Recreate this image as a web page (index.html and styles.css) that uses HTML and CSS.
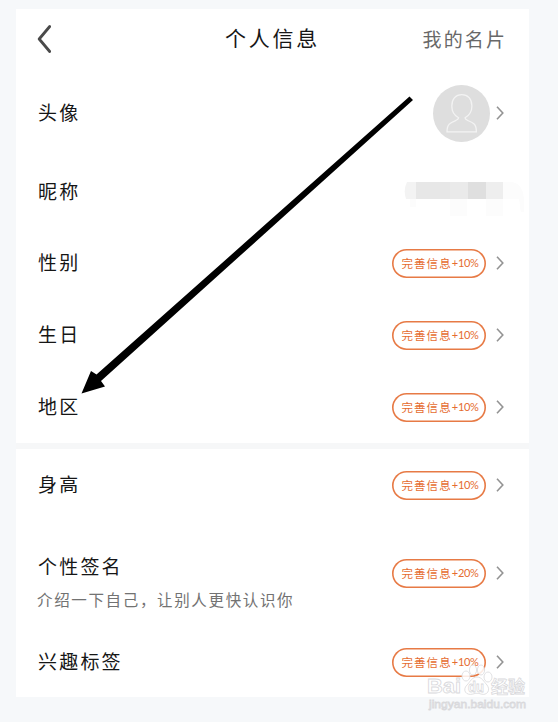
FILE: index.html
```html
<!DOCTYPE html>
<html lang="zh-CN">
<head>
<meta charset="utf-8">
<title>个人信息</title>
<link rel="stylesheet" href="styles.css">
</head>
<body>
<svg class="defs" width="0" height="0"><symbol id="chev" viewBox="0 0 8 14"><path d="M1 .8 6.8 7 1 13.2" fill="none" stroke="#939393" stroke-width="1.6"/></symbol></svg>
<main class="page">
  <header class="header">
    <svg class="back" viewBox="0 0 14 28"><path d="M12.7 1.5 2.2 14 12.7 26.5" fill="none" stroke="#4a4a4a" stroke-width="2.8" stroke-linecap="round" stroke-linejoin="round"/></svg>
    <h1 class="title">个人信息</h1>
    <a class="card-link">我的名片</a>
  </header>
  <section class="group">
    <div class="row row-avatar"><span class="label">头像</span>
      <svg class="avatar" viewBox="0 0 57 57"><circle cx="28.5" cy="28.5" r="28.5" fill="#dedede"/><path d="M25.6 32.8C21.2 30.4 18.8 25.7 18.8 21 18.8 14 22.8 9.6 28.8 9.6S38.9 14 38.9 21C38.9 25.7 36.4 30.4 32 32.8Q32 34.3 34.8 35.5C40.2 37.7 43.4 39 43.4 46.8H14C14 39 17.4 37.7 22.8 35.5Q25.6 34.3 25.6 32.8Z" fill="none" stroke="#f3f3f3" stroke-width="1.3"/></svg>
      <svg class="chev"><use href="#chev"/></svg></div>
    <div class="row row-name"><span class="label">昵称</span>
      <svg class="mosaic" viewBox="0 0 120 36"><path d="M99 0h7q13 0 14 18v12q-4 2-4-7l-1-6H99Z" fill="#fcfcfc"/><path d="M46 17h17v17H46zM82 17h17v17H82zM6 17h6v8H6z" fill="#fcfcfc"/><path d="M3 0h9v17H2Q-1 8 3 0Z" fill="#f3f3f3"/><path d="M12 0h34v17H12z" fill="#e7e7e7"/><path d="M46 0h18v17H46z" fill="#eaeaea"/><path d="M64 0h18v17H64z" fill="#dfdfdf"/><path d="M82 0h17v17H82z" fill="#eee"/></svg></div>
    <div class="row"><span class="label">性别</span><span class="badge">完善信息<b>+10%</b></span><svg class="chev"><use href="#chev"/></svg></div>
    <div class="row"><span class="label">生日</span><span class="badge">完善信息<b>+10%</b></span><svg class="chev"><use href="#chev"/></svg></div>
    <div class="row"><span class="label">地区</span><span class="badge">完善信息<b>+10%</b></span><svg class="chev"><use href="#chev"/></svg></div>
  </section>
  <section class="group">
    <div class="row"><span class="label">身高</span><span class="badge">完善信息<b>+10%</b></span><svg class="chev"><use href="#chev"/></svg></div>
    <div class="row row-sign"><div class="label">个性签名<p class="hint">介绍一下自己，让别人更快认识你</p></div><span class="badge">完善信息<b>+20%</b></span><svg class="chev"><use href="#chev"/></svg></div>
    <div class="row row-tags"><span class="label">兴趣标签</span><span class="badge">完善信息<b>+10%</b></span><svg class="chev"><use href="#chev"/></svg></div>
  </section>
</main>
<svg class="arrow" viewBox="0 0 558 722"><path d="M409.5 96.5 413 100 101 381 105 386.5 81.5 393.5 91 371 96.5 374.5Z" fill="#000"/></svg>
<svg class="watermark" viewBox="0 0 104 50">
  <g fill="#fff" fill-opacity=".85" stroke="#d9d9dc" stroke-width=".8">
    <ellipse cx="41" cy="14" rx="4" ry="5"/><ellipse cx="48" cy="8" rx="3.6" ry="5"/><ellipse cx="56" cy="8" rx="3.6" ry="5"/><ellipse cx="63" cy="15" rx="4" ry="5"/>
    <path d="M52 15c5 0 7 5 10 8 4 5 0 11-6 9-3-1-5-1-8 0-7 2-11-4-6-9 3-3 5-8 10-8Z"/>
    <text class="wm-bai" x="2" y="31" textLength="34" lengthAdjust="spacingAndGlyphs">Bai</text>
    <text class="wm-du" x="43" y="30" textLength="16" lengthAdjust="spacingAndGlyphs">du</text>
    <text class="wm-cn" x="66" y="30.5" textLength="34" lengthAdjust="spacingAndGlyphs">经验</text>
    <text class="wm-url" x="4" y="46" textLength="97" lengthAdjust="spacingAndGlyphs">jingyan.baidu.com</text>
  </g>
</svg>
</body>
</html>
```
FILE: styles.css
```css
* { box-sizing: border-box; }
body {
  position: relative;
  height: 722px;
  margin: 0;
  padding: 9px 29px 0 16px;
  overflow: hidden;
  background: #f6f8fa;
  color: #161616;
  font-family: "Noto Sans CJK SC", sans-serif;
}
.defs { position: absolute; }
.page {
  display: grid;
  gap: 0;
  background: #fff;
}
.header {
  display: grid;
  grid-template-columns: 1fr auto 1fr;
  align-items: center;
  height: 60px;
  padding: 0 22px 0 21px;
}
.back { width: 14px; height: 28px; }
.title {
  margin: 0;
  padding: 0 0 4px 1px;
  font-size: 21px;
  font-weight: 400;
  letter-spacing: 2.7px;
  line-height: 30px;
}
.card-link {
  justify-self: end;
  color: #686868;
  font-size: 19px;
  letter-spacing: 2.1px;
  line-height: 28px;
}
.group + .group { border-top: 6px solid #f6f7f8; }
.row {
  display: flex;
  align-items: center;
  height: 72px;
  padding: 0 25px 0 22px;
}
.label {
  flex: 1;
  padding-bottom: 2px;
  font-size: 19px;
  letter-spacing: 2.2px;
  line-height: 28px;
}
.row-avatar { height: 88px; }
.row-name { height: 70px; padding-right: 5px; }
.row-sign { height: 104px; }
.row-sign .label { padding: 16px 0 0; }
.row-tags { padding-top: 2px; }
.avatar { width: 57px; height: 57px; margin-right: 6px; }
.mosaic { width: 120px; height: 36px; margin-top: 16px; }
.chev { width: 8px; height: 14px; }
.badge {
  display: flex;
  align-items: center;
  justify-content: center;
  width: 94px;
  height: 29px;
  margin-right: 10px;
  padding: 0 0 1px 2px;
  border-radius: 15px;
  box-shadow: inset 0 0 0 1.6px #e77a45;
  color: #e56c30;
  font-size: 11.5px;
  letter-spacing: 1.1px;
  white-space: nowrap;
}
.badge b {
  font-family: Lato, sans-serif;
  font-size: 11px;
  font-weight: 400;
  letter-spacing: -0.3px;
}
.hint {
  margin: 7px 0 0 -1px;
  color: #727272;
  font-size: 15.5px;
  letter-spacing: 1.65px;
  line-height: 24px;
}
.arrow {
  position: absolute;
  top: 0;
  left: 0;
  width: 558px;
  height: 722px;
}
.watermark {
  position: absolute;
  top: 662px;
  left: 425px;
  width: 104px;
  height: 50px;
}
.wm-bai { font: 700 20px "Liberation Sans", sans-serif; }
.wm-du { font: 700 15px "Liberation Sans", sans-serif; }
.wm-cn { font: 700 17px "Noto Sans CJK SC", sans-serif; }
.wm-url { font: 400 11px "Liberation Sans", sans-serif; }
```
